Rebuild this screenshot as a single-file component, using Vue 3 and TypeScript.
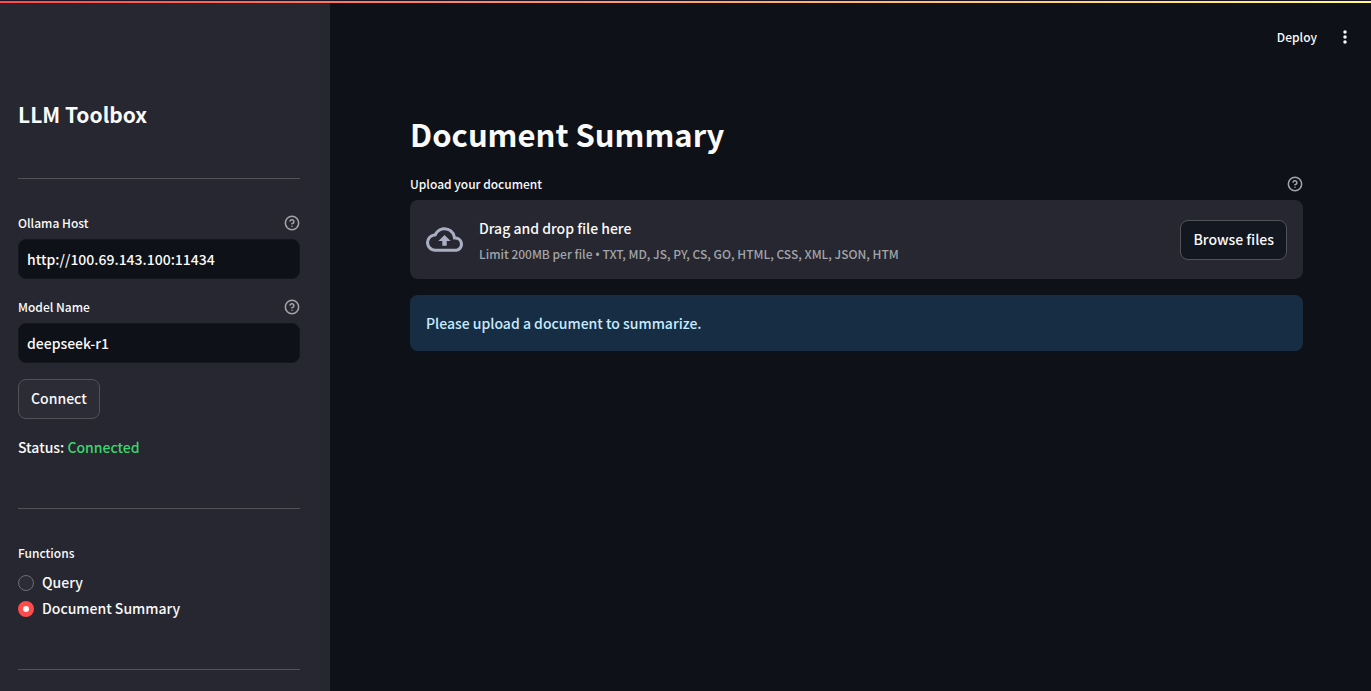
<script setup lang="ts">
import { ref } from 'vue'

interface Field {
  id: string
  label: string
  value: string
}

const fields = ref<Field[]>([
  { id: 'host', label: 'Ollama Host', value: 'http://100.69.143.100:11434' },
  { id: 'model', label: 'Model Name', value: 'deepseek-r1' },
])
const functions: string[] = ['Query', 'Document Summary']
const selected = ref<string>('Document Summary')
const fileTypes: string[] = ['TXT', 'MD', 'JS', 'PY', 'CS', 'GO', 'HTML', 'CSS', 'XML', 'JSON', 'HTM']
</script>

<template>
  <div class="app">
    <div class="decoration"></div>
    <aside class="sidebar">
      <h2 class="brand">LLM Toolbox</h2>
      <hr class="rule" />
      <div class="fields">
        <div v-for="field in fields" :key="field.id" class="field">
          <div class="label-row">
            <label :for="field.id">{{ field.label }}</label>
            <svg class="help" viewBox="0 0 24 24" aria-hidden="true">
              <circle cx="12" cy="12" r="10" />
              <path d="M9.09 9a3 3 0 0 1 5.83 1c0 2-3 3-3 3" />
              <path d="M12 17h.01" />
            </svg>
          </div>
          <input :id="field.id" v-model="field.value" class="text-input" type="text" spellcheck="false" />
        </div>
        <button class="button connect" type="button">Connect</button>
        <p class="status">Status: <span class="connected">Connected</span></p>
      </div>
      <hr class="rule" />
      <fieldset class="functions">
        <legend>Functions</legend>
        <label v-for="name in functions" :key="name" class="option">
          <input v-model="selected" type="radio" name="function" :value="name" />
          <span>{{ name }}</span>
        </label>
      </fieldset>
      <hr class="rule last" />
    </aside>

    <div class="page">
      <header class="toolbar">
        <button class="deploy" type="button">Deploy</button>
        <button class="menu" type="button" aria-label="Main menu">
          <svg viewBox="0 0 20 20" aria-hidden="true">
            <circle cx="10" cy="5" r="1.75" />
            <circle cx="10" cy="10" r="1.75" />
            <circle cx="10" cy="15" r="1.75" />
          </svg>
        </button>
      </header>
      <main class="content">
        <h1 class="title">Document Summary</h1>
        <div class="label-row">
          <label for="upload">Upload your document</label>
          <svg class="help" viewBox="0 0 24 24" aria-hidden="true">
            <circle cx="12" cy="12" r="10" />
            <path d="M9.09 9a3 3 0 0 1 5.83 1c0 2-3 3-3 3" />
            <path d="M12 17h.01" />
          </svg>
        </div>
        <section class="dropzone">
          <input id="upload" type="file" hidden />
          <svg class="cloud" viewBox="0 0 24 24" aria-hidden="true">
            <path
              d="M19.35 10.04A7.49 7.49 0 0 0 12 4C9.11 4 6.6 5.64 5.35 8.04A5.994 5.994 0 0 0 0 14c0 3.31 2.69 6 6 6h13c2.76 0 5-2.24 5-5 0-2.64-2.05-4.78-4.65-4.96zM19 18H6c-2.21 0-4-1.79-4-4 0-2.05 1.53-3.76 3.56-3.97l1.07-.11.5-.95A5.469 5.469 0 0 1 12 6c2.62 0 4.88 1.86 5.39 4.43l.3 1.5 1.53.11A2.98 2.98 0 0 1 22 15c0 1.65-1.35 3-3 3zM8 13h2.55v3h2.9v-3H16l-4-4z"
            />
          </svg>
          <div class="instructions">
            <span class="drag">Drag and drop file here</span>
            <small class="limit">Limit 200MB per file <span class="bullet">•</span> {{ fileTypes.join(', ') }}</small>
          </div>
          <button class="button browse" type="button">Browse files</button>
        </section>
        <div class="alert" role="alert">Please upload a document to summarize.</div>
      </main>
    </div>
  </div>
</template>

<style>
body {
  margin: 0;
  background: #0e1117;
}
</style>

<style scoped>
.app {
  display: flex;
  min-height: 100vh;
  box-sizing: border-box;
  color: #fafafa;
  background: #0e1117;
  font-family: "Noto Sans CJK SC", "Noto Sans", sans-serif;
  font-size: 14px;
  line-height: 24px;
  font-weight: 500;
}
.app *,
.app *::before {
  box-sizing: border-box;
}
button,
input {
  font: inherit;
  color: inherit;
}
.decoration {
  position: absolute;
  top: 0;
  left: 0;
  right: 0;
  height: 3px;
  border-top: 1px solid #1a1426;
  background: linear-gradient(90deg, #ff4b4b, #fffd80);
  background-origin: border-box;
}
.sidebar {
  flex: 0 0 330px;
  padding: 99px 30px 0 18px;
  background: #262730;
}
.brand {
  margin: 0 0 49px;
  font-size: 21px;
  line-height: 30px;
  font-weight: 700;
}
.rule {
  height: 1px;
  margin: 48px 0 32px;
  border: 0;
  background: #51525a;
}
.rule.last {
  margin: 48px 0 0;
}
.fields {
  display: flex;
  flex-direction: column;
  align-items: stretch;
  gap: 16px;
}
.label-row {
  display: flex;
  align-items: center;
  justify-content: space-between;
  height: 24px;
  margin-bottom: 4px;
  font-size: 12px;
}
.help {
  width: 16px;
  height: 16px;
  fill: none;
  stroke: #a3a4a8;
  stroke-width: 2.3;
  stroke-linecap: round;
  stroke-linejoin: round;
}
.text-input {
  display: block;
  width: 100%;
  height: 40px;
  padding: 0 8px;
  border: 1px solid #14171e;
  border-radius: 8px;
  outline: none;
  background: #0e1117;
}
.button {
  height: 40px;
  padding: 0 12px 2px;
  border: 1px solid #51525a;
  border-radius: 8px;
  white-space: nowrap;
}
.connect {
  align-self: flex-start;
  background: #2b2c36;
}
.status {
  margin: 0 0 1px;
}
.connected {
  color: #3dd56d;
}
.functions {
  display: flex;
  flex-direction: column;
  gap: 2px;
  margin: 0;
  padding: 0;
  border: 0;
}
.functions legend {
  padding: 0;
  margin-bottom: 6px;
  font-size: 12px;
}
.option {
  display: flex;
  align-items: center;
  gap: 8px;
  height: 24px;
}
.option span {
  padding-bottom: 2px;
}
.option input {
  appearance: none;
  width: 16px;
  height: 16px;
  margin: 0;
  border: 1px solid #6d6e76;
  border-radius: 50%;
  background: #2b2c36;
}
.option input:checked {
  border: 5px solid #ff4b4b;
  background: #fafafa;
}
.page {
  flex: 1;
  min-width: 0;
}
.toolbar {
  display: flex;
  align-items: center;
  justify-content: flex-end;
  gap: 18px;
  height: 74px;
  padding-right: 16px;
}
.deploy,
.menu {
  padding: 0;
  border: 0;
  background: none;
  font-size: 12px;
}
.menu svg {
  display: block;
  width: 20px;
  height: 20px;
  fill: #fafafa;
}
.content {
  padding: 36px 68px 40px 80px;
}
.title {
  margin: 0 0 14px;
  font-size: 31px;
  line-height: 48px;
  font-weight: 700;
}
.dropzone {
  display: flex;
  align-items: center;
  padding: 16px;
  border-radius: 8px;
  background: #262730;
}
.cloud {
  flex: none;
  width: 37px;
  height: 37px;
  margin-right: 16px;
  fill: #a9aec2;
}
.instructions {
  display: flex;
  flex: 1;
  min-width: 0;
  flex-direction: column;
}
.limit {
  margin-top: 4px;
  font-size: 12px;
  line-height: 19px;
  color: #a3a4a8;
}
.bullet {
  font-family: "Noto Sans", sans-serif;
  line-height: 1;
}
.browse {
  background: #131720;
}
.alert {
  margin-top: 16px;
  padding: 16px;
  border-radius: 8px;
  background: #172d43;
  color: #c7ebff;
}
</style>
